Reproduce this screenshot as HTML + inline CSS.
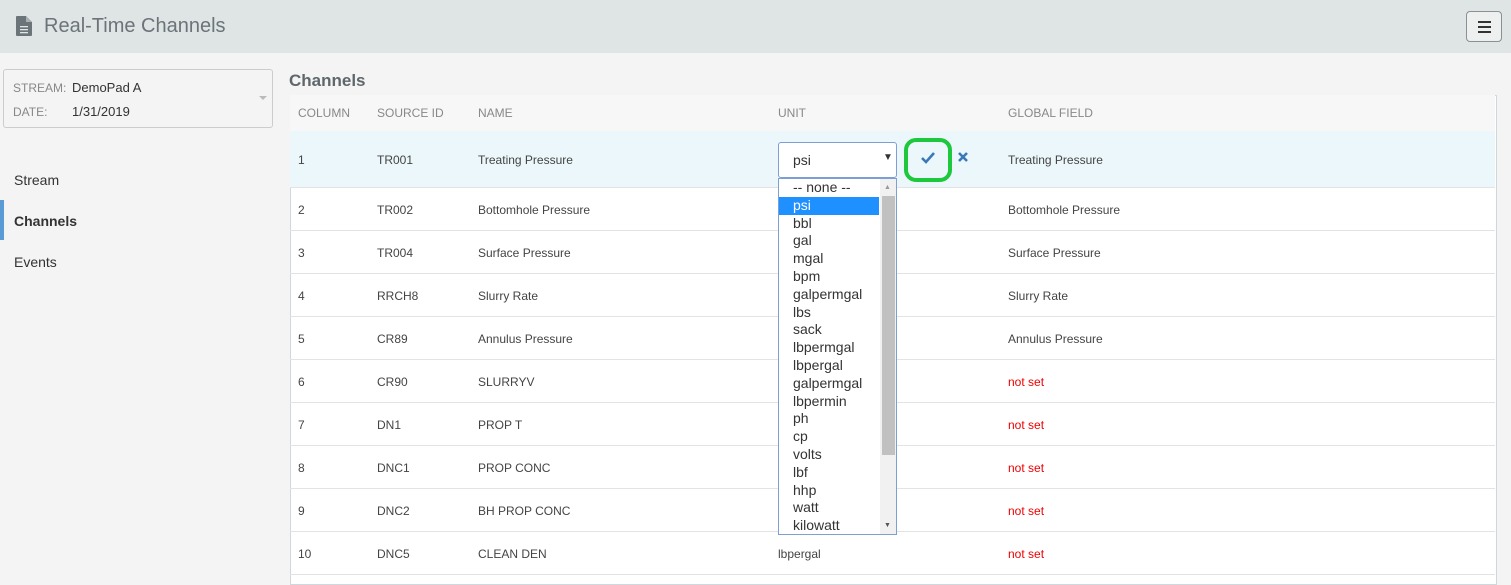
<!DOCTYPE html><html><head><style>
body{margin:0;width:1511px;height:578px;overflow:hidden;background:#f4f4f4;font-family:"Liberation Sans",sans-serif;position:relative}
.hdr{position:absolute;left:0;top:0;width:1511px;height:53px;background:#dfe4e4}
.title{position:absolute;left:44px;top:15px;font-size:20px;color:#6b7479}
.burger{position:absolute;left:1466px;top:11px;width:36px;height:31px;border:1px solid #8a9094;border-radius:4px;box-sizing:border-box;background:#eef0f0}
.burger i{position:absolute;left:11px;width:13px;height:2px;background:#333}
.sel{position:absolute;left:3px;top:69px;width:270px;height:59px;border:1px solid #ccc;border-radius:3px;box-sizing:border-box;font-size:13px}
.nav{position:absolute;left:14px;font-size:14px;color:#333}
.abs{position:absolute}
.panel{position:absolute;left:290px;top:95px;width:1207px;height:490px;background:#fff;border:1px solid #cfd8dc;box-sizing:border-box}
.row{position:absolute;left:-1px;width:1205px;border-bottom:1px solid #e3e3e3;font-size:12px;color:#444}
.row span{position:absolute}
.th span{color:#888;font-size:12px}
.list{position:absolute;left:778px;top:178px;width:119px;height:357px;background:#fff;border:1px solid #7d9fd4;box-sizing:border-box;font-size:14px;color:#333}
.list div{height:17.8px;line-height:17.8px;padding-left:14px;width:87px}
</style></head><body>
<div class="hdr">
<svg class="abs" style="left:16px;top:16px" width="16" height="20" viewBox="0 0 16 20"><path d="M0 1Q0 0 1 0H10L16 6V19Q16 20 15 20H1Q0 20 0 19Z" fill="#6b7479"/><path d="M10 0V6H16" fill="#a9b0b3"/><rect x="4" y="10" width="8" height="1.3" fill="#dfe4e4"/><rect x="4" y="13" width="8" height="1.3" fill="#dfe4e4"/><rect x="4" y="16" width="8" height="1.3" fill="#dfe4e4"/></svg>
<div class="title">Real-Time Channels</div>
<div class="burger"><i style="top:9px"></i><i style="top:14px"></i><i style="top:19px"></i></div>
</div>
<div class="sel"><span class="abs" style="left:9px;top:11px;color:#888;font-size:12px">STREAM:</span><span class="abs" style="left:68px;top:10px;color:#333">DemoPad A</span><span class="abs" style="left:9px;top:35px;color:#888;font-size:12px">DATE:</span><span class="abs" style="left:68px;top:34px;color:#333">1/31/2019</span><span class="abs" style="left:255px;top:26px;border:4px solid transparent;border-top:4px solid #bbb"></span></div>
<div class="nav" style="top:172px">Stream</div>
<div class="abs" style="left:0;top:200px;width:4px;height:40px;background:#5b9bd5"></div>
<div class="nav" style="top:213px;font-weight:bold">Channels</div>
<div class="nav" style="top:254px">Events</div>
<div class="abs" style="left:289px;top:71px;font-size:17px;font-weight:bold;color:#5f676b">Channels</div>
<div class="panel">
<div class="row th" style="top:-1px;height:36px;background:#f7f7f7"><span style="left:8px;top:11px">COLUMN</span><span style="left:87px;top:11px">SOURCE ID</span><span style="left:188px;top:11px">NAME</span><span style="left:488px;top:11px">UNIT</span><span style="left:718px;top:11px">GLOBAL FIELD</span></div>
<div class="row" style="top:35px;height:56px;background:#ebf7fb"><span style="left:8px;top:22px">1</span><span style="left:87px;top:22px">TR001</span><span style="left:188px;top:22px">Treating Pressure</span><span style="left:718px;top:22px">Treating Pressure</span></div>
<div class="row" style="top:92px;height:42px"><span style="left:8px;top:15px">2</span><span style="left:87px;top:15px">TR002</span><span style="left:188px;top:15px">Bottomhole Pressure</span><span style="left:718px;top:15px">Bottomhole Pressure</span></div>
<div class="row" style="top:135px;height:42px"><span style="left:8px;top:15px">3</span><span style="left:87px;top:15px">TR004</span><span style="left:188px;top:15px">Surface Pressure</span><span style="left:718px;top:15px">Surface Pressure</span></div>
<div class="row" style="top:178px;height:42px"><span style="left:8px;top:15px">4</span><span style="left:87px;top:15px">RRCH8</span><span style="left:188px;top:15px">Slurry Rate</span><span style="left:718px;top:15px">Slurry Rate</span></div>
<div class="row" style="top:221px;height:42px"><span style="left:8px;top:15px">5</span><span style="left:87px;top:15px">CR89</span><span style="left:188px;top:15px">Annulus Pressure</span><span style="left:718px;top:15px">Annulus Pressure</span></div>
<div class="row" style="top:264px;height:42px"><span style="left:8px;top:15px">6</span><span style="left:87px;top:15px">CR90</span><span style="left:188px;top:15px">SLURRYV</span><span style="left:718px;top:15px;color:#e00">not set</span></div>
<div class="row" style="top:307px;height:42px"><span style="left:8px;top:15px">7</span><span style="left:87px;top:15px">DN1</span><span style="left:188px;top:15px">PROP T</span><span style="left:718px;top:15px;color:#e00">not set</span></div>
<div class="row" style="top:350px;height:42px"><span style="left:8px;top:15px">8</span><span style="left:87px;top:15px">DNC1</span><span style="left:188px;top:15px">PROP CONC</span><span style="left:718px;top:15px;color:#e00">not set</span></div>
<div class="row" style="top:393px;height:42px"><span style="left:8px;top:15px">9</span><span style="left:87px;top:15px">DNC2</span><span style="left:188px;top:15px">BH PROP CONC</span><span style="left:718px;top:15px;color:#e00">not set</span></div>
<div class="row" style="top:436px;height:42px"><span style="left:8px;top:15px">10</span><span style="left:87px;top:15px">DNC5</span><span style="left:188px;top:15px">CLEAN DEN</span><span style="left:488px;top:15px">lbpergal</span><span style="left:718px;top:15px;color:#e00">not set</span></div>
</div>
<div class="abs" style="left:778px;top:142px;width:119px;height:36px;border:1px solid #7d9fd4;border-radius:3px;box-sizing:border-box;background:#fff;font-size:14px;color:#333"><span class="abs" style="left:14px;top:9px">psi</span><span class="abs" style="left:104px;top:9px;font-size:10px">▼</span></div>
<div class="abs" style="left:904px;top:138px;width:40px;height:36px;border:4px solid #1ec83c;border-radius:12px"></div>
<svg class="abs" style="left:920px;top:151px" width="16" height="13" viewBox="0 0 16 13"><path d="M2 7L6 11L14 2" stroke="#3a79b8" stroke-width="2.6" fill="none"/></svg>
<svg class="abs" style="left:957px;top:151px" width="12" height="12" viewBox="0 0 12 12"><path d="M2 2L10 10M10 2L2 10" stroke="#3a79b8" stroke-width="2.6"/></svg>
<div class="list"><div style="margin-top:0">-- none --</div><div style="background:#1e90ff;color:#fff;width:86px">psi</div><div>bbl</div><div>gal</div><div>mgal</div><div>bpm</div><div>galpermgal</div><div>lbs</div><div>sack</div><div>lbpermgal</div><div>lbpergal</div><div>galpermgal</div><div>lbpermin</div><div>ph</div><div>cp</div><div>volts</div><div>lbf</div><div>hhp</div><div>watt</div><div>kilowatt</div>
<span class="abs" style="left:101px;top:0;width:16px;height:355px;background:#f1f1f1"></span>
<span class="abs" style="left:103px;top:17px;width:13px;height:259px;background:#c1c1c1"></span>
<span class="abs" style="left:105px;top:5px;font-size:7px;color:#999">▲</span>
<span class="abs" style="left:105px;top:343px;font-size:7px;color:#555">▼</span>
</div>
</body></html>
